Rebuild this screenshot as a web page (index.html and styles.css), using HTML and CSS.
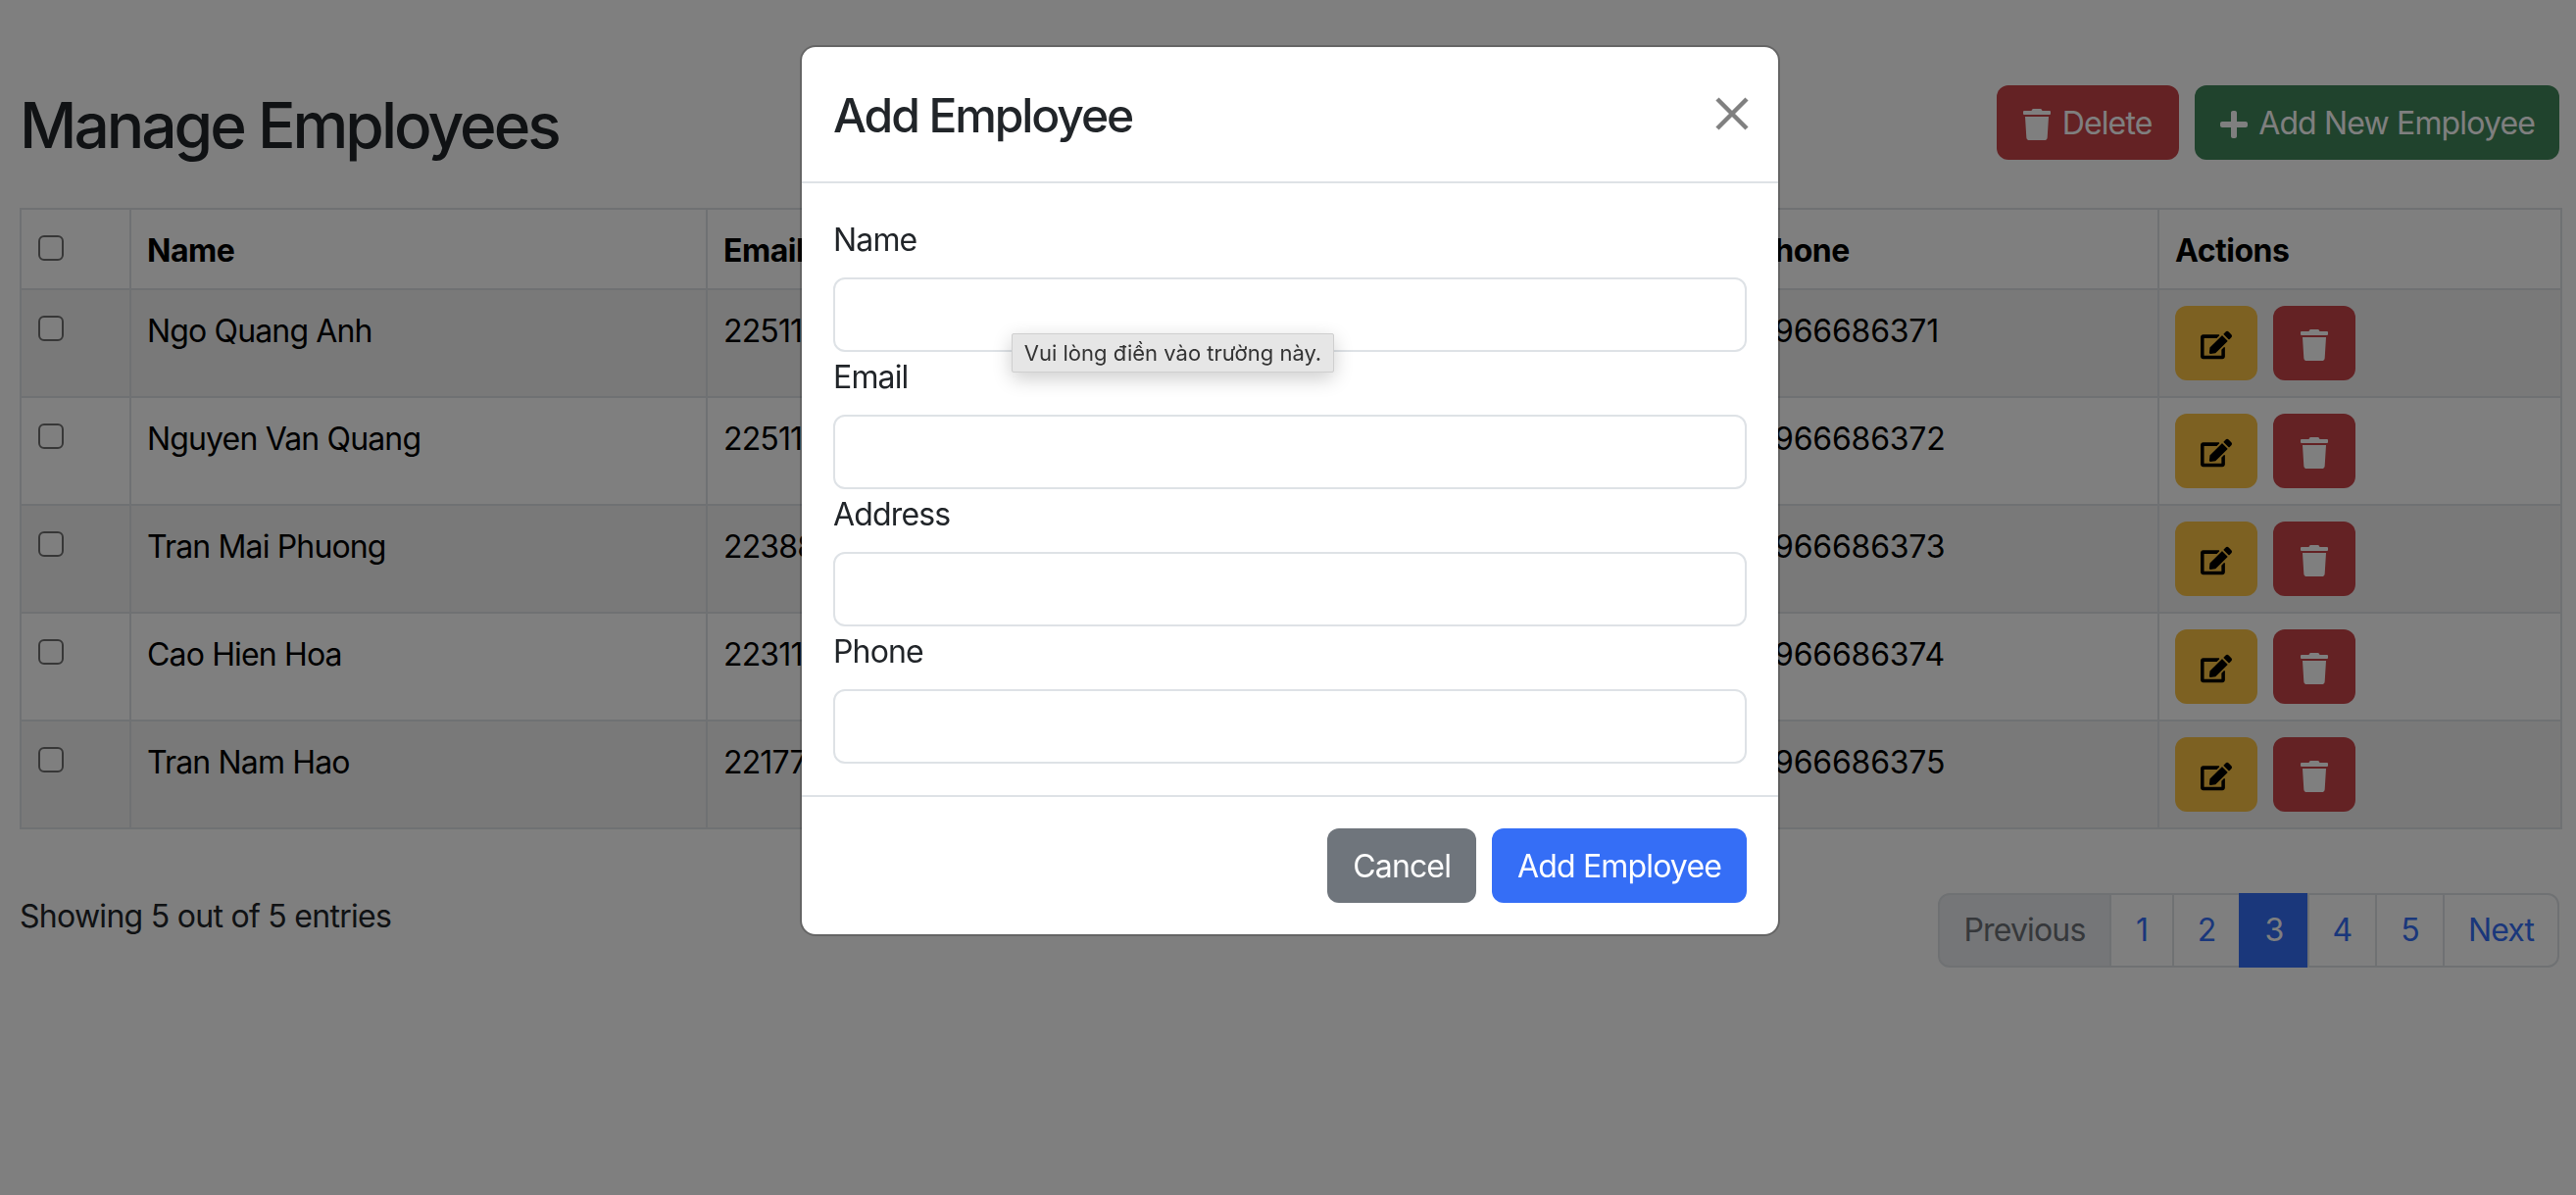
FILE: index.html
```html
<!DOCTYPE html>
<html lang="en">
<head>
    <meta charset="UTF-8">
    <title>Manage Employees</title>
    <link rel="stylesheet" href="styles.css">
</head>
<body>
    <svg class="icon-defs" width="0" height="0">
        <symbol id="i-trash" viewBox="0 0 448 512"><path d="M432 32H312l-9.4-18.7A24 24 0 0 0 281.1 0H166.8a23.72 23.72 0 0 0-21.4 13.3L136 32H16A16 16 0 0 0 0 48v32a16 16 0 0 0 16 16h416a16 16 0 0 0 16-16V48a16 16 0 0 0-16-16zM53.2 467a48 48 0 0 0 47.9 45h245.8a48 48 0 0 0 47.9-45L416 128H32z"/></symbol>
        <symbol id="i-plus" viewBox="0 0 448 512"><path d="M416 208H272V64c0-17.67-14.33-32-32-32h-32c-17.67 0-32 14.33-32 32v144H32c-17.67 0-32 14.33-32 32v32c0 17.67 14.33 32 32 32h144v144c0 17.67 14.33 32 32 32h32c17.67 0 32-14.33 32-32V304h144c17.67 0 32-14.33 32-32v-32c0-17.67-14.33-32-32-32z"/></symbol>
        <symbol id="i-edit" viewBox="0 0 576 512"><path d="M402.6 83.2l90.2 90.2c3.8 3.8 3.8 10 0 13.8L274.4 405.6l-92.8 10.3c-12.4 1.4-22.9-9.1-21.5-21.5l10.3-92.8L388.8 83.2c3.8-3.8 10-3.8 13.8 0zm162-22.9l-48.8-48.8c-15.2-15.2-39.9-15.2-55.2 0l-35.4 35.4c-3.8 3.8-3.8 10 0 13.8l90.2 90.2c3.8 3.8 10 3.8 13.8 0l35.4-35.4c15.2-15.3 15.2-40 0-55.2zM384 346.2V448H64V128h229.8c3.2 0 6.2-1.3 8.5-3.5l40-40c7.6-7.6 2.2-20.5-8.5-20.5H48C21.5 64 0 85.5 0 112v352c0 26.5 21.5 48 48 48h352c26.5 0 48-21.5 48-48V306.2c0-10.7-12.9-16-20.5-8.5l-40 40c-2.2 2.3-3.5 5.3-3.5 8.5z"/></symbol>
    </svg>

    <div class="page">
        <div class="page-head">
            <h2 class="page-title">Manage Employees</h2>
            <div class="head-actions">
                <button class="btn btn-danger"><svg class="icon"><use href="#i-trash"/></svg> Delete</button>
                <button class="btn btn-success"><svg class="icon"><use href="#i-plus"/></svg> Add New Employee</button>
            </div>
        </div>

        <table class="emp-table">
            <colgroup>
                <col class="col-check">
                <col class="col-name">
                <col class="col-email">
                <col class="col-address">
                <col class="col-phone">
                <col class="col-actions">
            </colgroup>
            <thead>
                <tr>
                    <th><input type="checkbox" class="check"></th>
                    <th>Name</th>
                    <th>Email</th>
                    <th>Address</th>
                    <th>Phone</th>
                    <th>Actions</th>
                </tr>
            </thead>
            <tbody>
                <tr>
                    <td><input type="checkbox" class="check"></td>
                    <td>Ngo Quang Anh</td>
                    <td>22511</td>
                    <td></td>
                    <td class="phone">0966686371</td>
                    <td class="actions-cell">
                        <div class="row-actions">
                            <button class="btn btn-warning"><svg class="icon icon-edit"><use href="#i-edit"/></svg></button>
                            <button class="btn btn-danger"><svg class="icon"><use href="#i-trash"/></svg></button>
                        </div>
                    </td>
                </tr>
                <tr>
                    <td><input type="checkbox" class="check"></td>
                    <td>Nguyen Van Quang</td>
                    <td>22511</td>
                    <td></td>
                    <td class="phone">0966686372</td>
                    <td class="actions-cell">
                        <div class="row-actions">
                            <button class="btn btn-warning"><svg class="icon icon-edit"><use href="#i-edit"/></svg></button>
                            <button class="btn btn-danger"><svg class="icon"><use href="#i-trash"/></svg></button>
                        </div>
                    </td>
                </tr>
                <tr>
                    <td><input type="checkbox" class="check"></td>
                    <td>Tran Mai Phuong</td>
                    <td>22388</td>
                    <td></td>
                    <td class="phone">0966686373</td>
                    <td class="actions-cell">
                        <div class="row-actions">
                            <button class="btn btn-warning"><svg class="icon icon-edit"><use href="#i-edit"/></svg></button>
                            <button class="btn btn-danger"><svg class="icon"><use href="#i-trash"/></svg></button>
                        </div>
                    </td>
                </tr>
                <tr>
                    <td><input type="checkbox" class="check"></td>
                    <td>Cao Hien Hoa</td>
                    <td>22311</td>
                    <td></td>
                    <td class="phone">0966686374</td>
                    <td class="actions-cell">
                        <div class="row-actions">
                            <button class="btn btn-warning"><svg class="icon icon-edit"><use href="#i-edit"/></svg></button>
                            <button class="btn btn-danger"><svg class="icon"><use href="#i-trash"/></svg></button>
                        </div>
                    </td>
                </tr>
                <tr>
                    <td><input type="checkbox" class="check"></td>
                    <td>Tran Nam Hao</td>
                    <td>22177</td>
                    <td></td>
                    <td class="phone">0966686375</td>
                    <td class="actions-cell">
                        <div class="row-actions">
                            <button class="btn btn-warning"><svg class="icon icon-edit"><use href="#i-edit"/></svg></button>
                            <button class="btn btn-danger"><svg class="icon"><use href="#i-trash"/></svg></button>
                        </div>
                    </td>
                </tr>
            </tbody>
        </table>

        <div class="table-foot">
            <div class="entries">Showing 5 out of 5 entries</div>
            <ul class="pagination">
                <li class="page-item prev">Previous</li>
                <li class="page-item num-1">1</li>
                <li class="page-item num-2">2</li>
                <li class="page-item num-3 active">3</li>
                <li class="page-item num-4">4</li>
                <li class="page-item num-5">5</li>
                <li class="page-item next">Next</li>
            </ul>
        </div>
    </div>

    <div class="backdrop"></div>

    <div class="modal">
        <div class="modal-header">
            <h4 class="modal-title">Add Employee</h4>
            <svg class="modal-close" viewBox="0 0 34 34"><path d="M2 2L32 32M32 2L2 32"/></svg>
        </div>
        <div class="modal-body">
            <label class="form-label">Name</label>
            <input type="text" class="form-input">
            <label class="form-label">Email</label>
            <input type="text" class="form-input">
            <label class="form-label">Address</label>
            <input type="text" class="form-input">
            <label class="form-label">Phone</label>
            <input type="text" class="form-input">
        </div>
        <div class="modal-footer">
            <button class="btn btn-secondary">Cancel</button>
            <button class="btn btn-primary">Add Employee</button>
        </div>
        <div class="tooltip">Vui lòng điền vào trường này.</div>
    </div>
</body>
</html>
```

FILE: styles.css
```css
* {
    box-sizing: border-box;
}

body {
    margin: 0;
    background-color: #fff;
    color: #212529;
    font-family: Inter, "Liberation Sans", sans-serif;
    font-size: 32px;
    line-height: 48px;
    letter-spacing: -0.85px;
    min-height: 1219px;
}

.icon-defs {
    position: absolute;
}

.page {
    padding: 87px 16px 0 20px;
}

.page-head {
    display: flex;
    justify-content: space-between;
    align-items: flex-start;
    margin-right: 1px;
    margin-bottom: 46px;
}

.page-title {
    margin: 2px 0 0;
    font-size: 64px;
    line-height: 77px;
    font-weight: 500;
    letter-spacing: -3px;
}

.head-actions {
    display: flex;
    gap: 16px;
}

.head-actions .btn-danger {
    width: 186px;
}

.head-actions .btn-success {
    width: 372px;
}

.btn {
    height: 76px;
    padding: 2px 24px 0;
    border: 2px solid transparent;
    border-radius: 12px;
    font: inherit;
    letter-spacing: inherit;
    color: #fff;
    white-space: nowrap;
}

.btn-danger {
    background-color: #c84448;
}

.btn-success {
    background-color: #40865a;
}

.btn-warning {
    background-color: #fac244;
    color: #000;
}

.btn-secondary {
    background-color: #6f757c;
}

.btn-primary {
    background-color: #356ef6;
}

.icon {
    width: 28px;
    height: 32px;
    margin-right: 3px;
    fill: currentColor;
    vertical-align: -6px;
}

.icon-edit {
    width: 32px;
}

.emp-table {
    width: 2592px;
    table-layout: fixed;
    border-collapse: collapse;
    color: #000;
}

.col-check { width: 112px; }
.col-name { width: 588px; }
.col-email { width: 380px; }
.col-address { width: 672px; }
.col-phone { width: 429px; }
.col-actions { width: 411px; }

.emp-table th,
.emp-table td {
    border: 2px solid #dee2e6;
    padding: 18px 16px 14px;
    text-align: left;
    vertical-align: top;
    white-space: nowrap;
}

.emp-table th {
    font-weight: 700;
    letter-spacing: -0.5px;
}

.emp-table tbody tr:nth-child(odd) td {
    background-color: #f2f2f2;
}

.emp-table td.phone {
    letter-spacing: -0.2px;
}

.emp-table td.actions-cell {
    padding: 16px;
}

.check {
    appearance: none;
    display: block;
    width: 26px;
    height: 26px;
    margin: 8px 0 0 1px;
    border: 2px solid #6f6f6f;
    border-radius: 6px;
    background-color: #fff;
}

.row-actions {
    display: flex;
    gap: 16px;
}

.row-actions .btn {
    width: 84px;
    padding: 2px 0 0;
}

.row-actions .icon {
    margin-right: 0;
}

.table-foot {
    display: flex;
    justify-content: space-between;
    align-items: flex-start;
    margin-top: 65px;
    margin-right: 1px;
}

.entries {
    letter-spacing: -0.72px;
}

.pagination {
    display: flex;
    margin: 0;
    padding: 0;
    list-style: none;
}

.page-item {
    height: 76px;
    padding: 12px 0;
    border: 2px solid #dee2e6;
    margin-left: -2px;
    color: #356ef6;
    background-color: #fff;
    text-align: center;
}

.prev {
    width: 177px;
    margin-left: 0;
    border-radius: 12px 0 0 12px;
    color: #6c7076;
    background-color: #ebedf0;
}

.num-1 { width: 66px; }
.num-2 { width: 70px; }
.num-3 { width: 72px; }
.num-4 { width: 71px; }
.num-5 { width: 71px; }

.next {
    width: 119px;
    border-radius: 0 12px 12px 0;
}

.active {
    color: #fff;
    background-color: #356ef6;
    border-color: #356ef6;
}

.backdrop {
    position: fixed;
    inset: 0;
    background-color: rgba(0, 0, 0, 0.5);
}

.modal {
    position: absolute;
    left: 816px;
    top: 46px;
    width: 1000px;
    border: 2px solid rgba(0, 0, 0, 0.2);
    border-radius: 16px;
    background-color: #fff;
    background-clip: padding-box;
}

.modal-header {
    display: flex;
    justify-content: space-between;
    align-items: center;
    height: 139px;
    padding: 3px 32px 0;
    border-bottom: 2px solid #dee2e6;
}

.modal-title {
    margin: 0;
    font-size: 48px;
    line-height: 72px;
    font-weight: 500;
    letter-spacing: -2.1px;
}

.modal-close {
    width: 34px;
    height: 34px;
    margin-top: -4px;
    margin-right: -2px;
    fill: none;
    stroke: #808080;
    stroke-width: 4.5;
}

.modal-body {
    padding: 32px;
}

.form-label {
    display: block;
    margin: 2px 0 14px;
}

.form-input {
    display: block;
    width: 100%;
    height: 76px;
    padding: 12px 24px;
    border: 2px solid #dee2e6;
    border-radius: 12px;
    background-color: #fff;
    font: inherit;
}

.modal-footer {
    display: flex;
    justify-content: flex-end;
    gap: 16px;
    padding: 32px;
    border-top: 2px solid #dee2e6;
}

.tooltip {
    position: absolute;
    left: 214px;
    top: 292px;
    width: 329px;
    height: 40px;
    border: 1px solid #cfcfcf;
    border-radius: 2px;
    background-color: #e6e6e6;
    color: #333;
    font-size: 22px;
    line-height: 38px;
    letter-spacing: 0;
    text-align: center;
    box-shadow: 0 6px 20px rgba(0, 0, 0, 0.2);
}
```
